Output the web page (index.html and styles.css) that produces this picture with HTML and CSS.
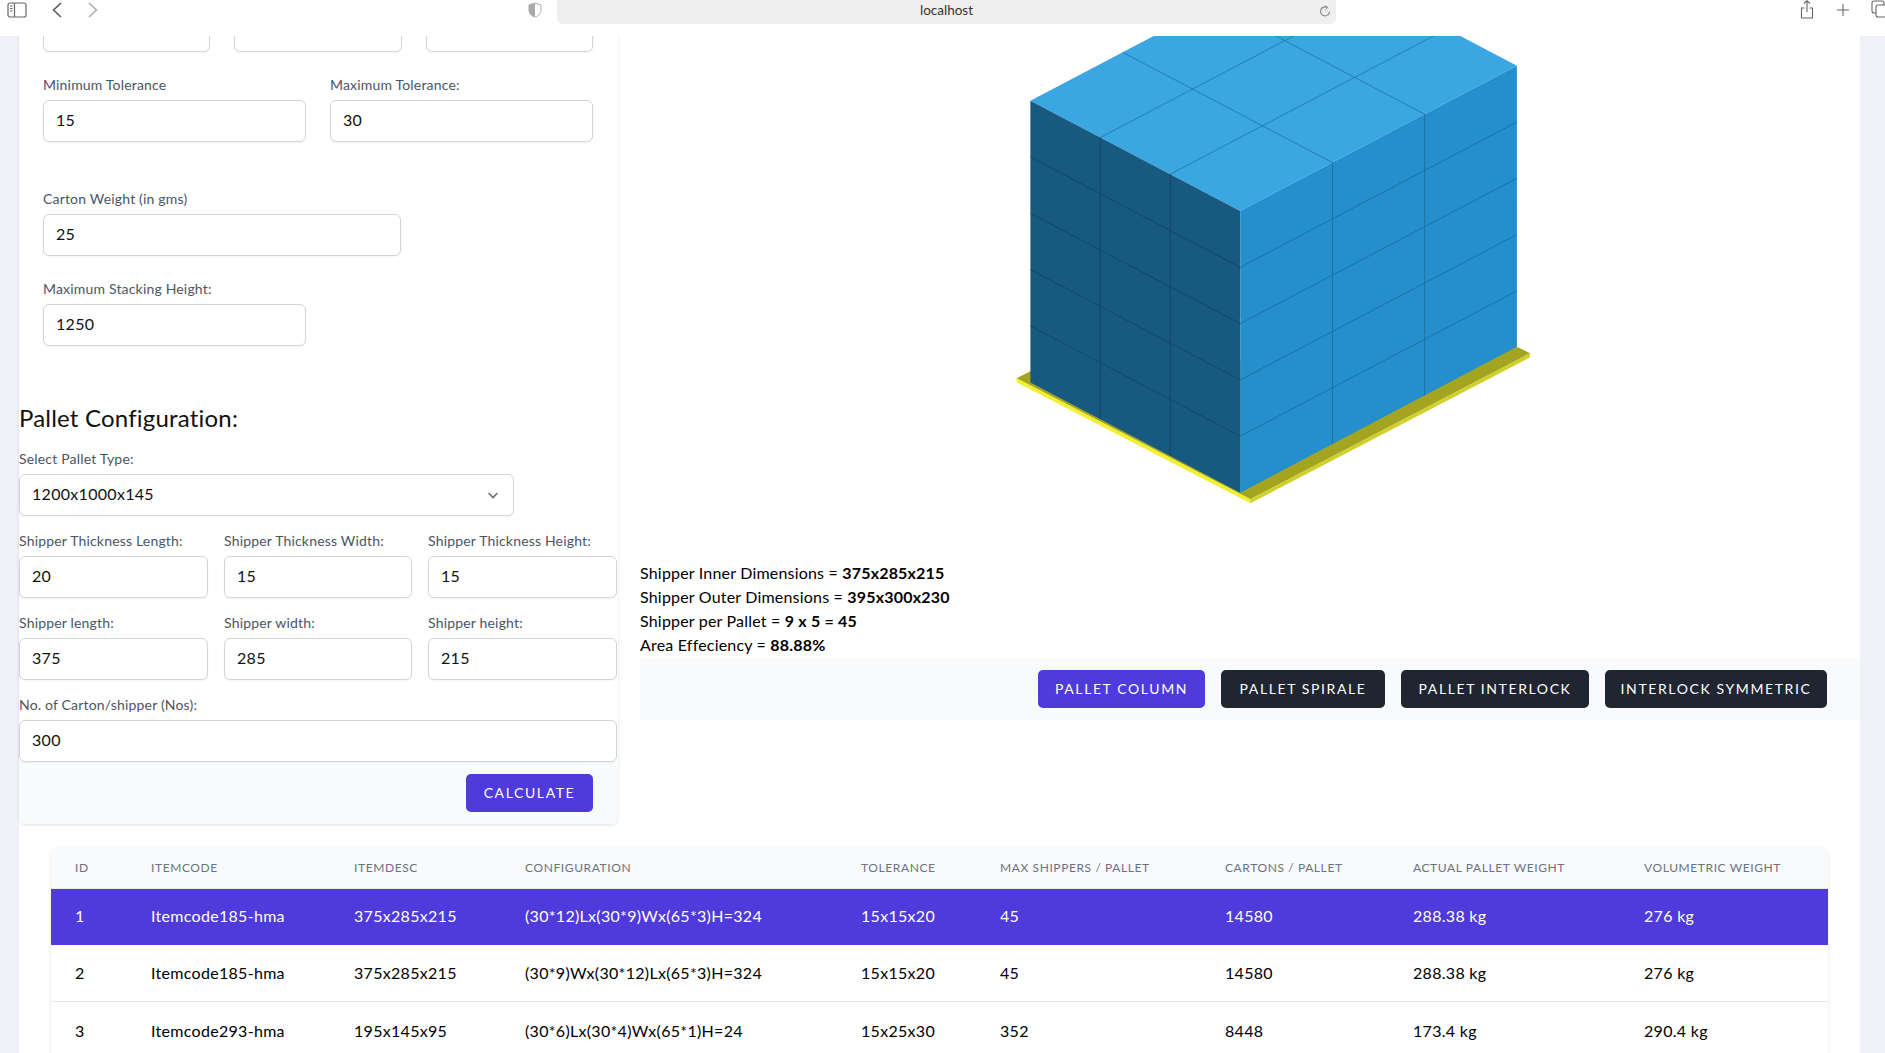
FILE: index.html
```html
<!DOCTYPE html>
<html lang="en">
<head>
  <meta charset="UTF-8">
  <title>localhost</title>
  <link rel="stylesheet" href="styles.css">
</head>
<body>

<header class="toolbar">
  <div class="toolbar-left">
    <svg class="tb-icon" width="20" height="16" viewBox="0 0 20 16"><rect x="1" y="1" width="18" height="14" rx="2" fill="none" stroke="#666" stroke-width="1.2"/><path d="M7.5 1v14" stroke="#666" stroke-width="1.2"/><path d="M3 4h2.5M3 6.5h2.5M3 9h2.5" stroke="#666"/></svg>
    <svg class="tb-back" width="10" height="16" viewBox="0 0 10 16"><path d="M9 1L1.500 8 9 15" fill="none" stroke="#555" stroke-width="1.500"/></svg>
    <svg class="tb-forward" width="10" height="16" viewBox="0 0 10 16"><path d="M1 1l7.500 7L1 15" fill="none" stroke="#aaa" stroke-width="1.500"/></svg>
  </div>
  <svg class="tb-shield" width="16" height="16" viewBox="0 0 16 16"><path d="M8 1l6 2v5c0 3.500-2.500 6-6 7-3.500-1-6-3.500-6-7V3z" fill="#fff" stroke="#aaa"/><path d="M8 1L2 3v5c0 3.500 2.500 6 6 7z" fill="#aaa"/></svg>
  <div class="urlbar">
    <span>localhost</span>
    <svg class="tb-reload" width="12" height="12" viewBox="0 0 12 12"><path d="M10.500 6.500a4.500 4.500 0 1 1-2.200-4" fill="none" stroke="#888" stroke-width="1.100"/><path d="M6.500 .5l2.200 2-2.200 2" fill="none" stroke="#888"/></svg>
  </div>
  <div class="toolbar-right">
    <svg width="14" height="19" viewBox="0 0 14 19"><path d="M4.500 8H1.500v10h11V8H9.500M7 12V1M4 3.500L7 .8l3 2.700" fill="none" stroke="#666" stroke-width="1.100"/></svg>
    <svg class="tb-plus" width="14" height="14" viewBox="0 0 14 14"><path d="M7 1v12M1 7h12" stroke="#666" stroke-width="1.100"/></svg>
    <svg class="tb-tabs" width="16" height="18" viewBox="0 0 16 18"><rect x="1" y="1" width="12" height="12" rx="2" fill="none" stroke="#666" stroke-width="1.100"/><rect x="5" y="5" width="12" height="12" rx="2" fill="#fff" stroke="#666" stroke-width="1.100"/></svg>
  </div>
</header>

<div class="viewport">
  <main class="page">
    <div class="columns">

      <section class="card">
        <div class="card-top">
          <div class="row three">
            <div class="field"><input class="input" value="30"></div>
            <div class="field"><input class="input" value="30"></div>
            <div class="field"><input class="input" value="65"></div>
          </div>
          <div class="row two">
            <div class="field"><label>Minimum Tolerance</label><input class="input" value="15"></div>
            <div class="field"><label>Maximum Tolerance:</label><input class="input" value="30"></div>
          </div>
          <div class="row carton">
            <div class="field"><label>Carton Weight (in gms)</label><input class="input" value="25"></div>
          </div>
          <div class="row two">
            <div class="field"><label>Maximum Stacking Height:</label><input class="input" value="1250"></div>
          </div>
        </div>

        <h2 class="section-title">Pallet Configuration:</h2>

        <div class="pallet-form">
          <div class="field select-field">
            <label>Select Pallet Type:</label>
            <div class="select">
              <span>1200x1000x145</span>
              <svg width="14" height="14" viewBox="0 0 14 14"><path d="M2.500 5l4.500 4.500L11.500 5" fill="none" stroke="#6b7280" stroke-width="1.700"/></svg>
            </div>
          </div>
          <div class="row pallet-three">
            <div class="field"><label>Shipper Thickness Length:</label><input class="input" value="20"></div>
            <div class="field"><label>Shipper Thickness Width:</label><input class="input" value="15"></div>
            <div class="field"><label>Shipper Thickness Height:</label><input class="input" value="15"></div>
          </div>
          <div class="row pallet-three">
            <div class="field"><label>Shipper length:</label><input class="input" value="375"></div>
            <div class="field"><label>Shipper width:</label><input class="input" value="285"></div>
            <div class="field"><label>Shipper height:</label><input class="input" value="215"></div>
          </div>
          <div class="field">
            <label>No. of Carton/shipper (Nos):</label>
            <input class="input" value="300">
          </div>
        </div>

        <div class="card-footer">
          <button class="btn btn-primary btn-calc">Calculate</button>
        </div>
      </section>

      <section class="result">
        <svg class="stack" width="1220" height="551" viewBox="640 10 1220 551">
          <!-- pallet -->
          <polygon points="1016.500,378.300 1030.400,371.300 1516.900,346.700 1530,353.300 1250.400,499.300" fill="#a3a521"/>
          <polygon points="1016.500,378.300 1250.400,499.300 1250.400,503.300 1016.500,382.300" fill="#f0f02e"/>
          <polygon points="1250.400,499.300 1530,353.300 1530,357.300 1250.400,503.300" fill="#cfd02a"/>
          <!-- faces -->
          <polygon points="1030.400,100.700 1240.200,211 1516.900,65.700 1307.100,-44.600" fill="#3aa7e3"/>
          <polygon points="1030.400,100.700 1240.200,211 1240.200,492.700 1030.400,382.400" fill="#18597f"/>
          <polygon points="1240.200,211 1516.900,65.700 1516.900,346.700 1240.200,492.700" fill="#258ecc"/>
          <!-- top grid -->
          <g stroke="#1d6d9c" stroke-width="0.700" fill="none">
            <path d="M1100.300,137.500 L1377,-7.800 M1170.300,174.200 L1447,28.900"/>
            <path d="M1332.400,162.600 L1122.600,52.300 M1424.600,114.200 L1214.800,3.900"/>
          </g>
          <!-- left face -->
          <g stroke="#11415f" stroke-width="0.800" fill="none">
            <path d="M1100.300,137.500 V419.100 M1170.300,174.200 V455.900"/>
            <path d="M1030.400,157 L1240.200,267.300 M1030.400,213.300 L1240.200,323.600 M1030.400,269.600 L1240.200,379.900 M1030.400,325.900 L1240.200,436.200"/>
          </g>
          <!-- right face -->
          <g stroke="#1a6a9b" stroke-width="0.800" fill="none">
            <path d="M1332.400,162.600 V444.200 M1424.600,114.200 V395.800"/>
            <path d="M1240.200,267.300 L1516.900,122 M1240.200,323.600 L1516.900,178.300 M1240.200,379.900 L1516.900,234.600 M1240.200,436.200 L1516.900,290.900"/>
          </g>
        </svg>

        <div class="summary">
          <p>Shipper Inner Dimensions = <b>375x285x215</b></p>
          <p>Shipper Outer Dimensions = <b>395x300x230</b></p>
          <p>Shipper per Pallet = <b>9 x 5 = 45</b></p>
          <p>Area Effeciency = <b>88.88%</b></p>
        </div>

        <div class="actions">
          <button class="btn btn-primary btn-column">Pallet Column</button>
          <button class="btn btn-dark btn-spirale">Pallet Spirale</button>
          <button class="btn btn-dark btn-interlock">Pallet Interlock</button>
          <button class="btn btn-dark btn-symmetric">Interlock Symmetric</button>
        </div>
      </section>
    </div>

    <div class="table-wrap">
      <table class="results">
        <thead>
          <tr>
            <th>ID</th><th>Itemcode</th><th>Itemdesc</th><th>Configuration</th><th>Tolerance</th>
            <th>Max Shippers / Pallet</th><th>Cartons / Pallet</th><th>Actual Pallet Weight</th><th>Volumetric Weight</th>
          </tr>
        </thead>
        <tbody>
          <tr class="selected">
            <td>1</td><td>Itemcode185-hma</td><td>375x285x215</td><td>(30*12)Lx(30*9)Wx(65*3)H=324</td><td>15x15x20</td>
            <td>45</td><td>14580</td><td>288.38 kg</td><td>276 kg</td>
          </tr>
          <tr>
            <td>2</td><td>Itemcode185-hma</td><td>375x285x215</td><td>(30*9)Wx(30*12)Lx(65*3)H=324</td><td>15x15x20</td>
            <td>45</td><td>14580</td><td>288.38 kg</td><td>276 kg</td>
          </tr>
          <tr class="last">
            <td>3</td><td>Itemcode293-hma</td><td>195x145x95</td><td>(30*6)Lx(30*4)Wx(65*1)H=24</td><td>15x25x30</td>
            <td>352</td><td>8448</td><td>173.4 kg</td><td>290.4 kg</td>
          </tr>
        </tbody>
      </table>
    </div>
  </main>
</div>

</body>
</html>
```

FILE: styles.css
```css
* {
  box-sizing: border-box;
}

html, body {
  margin: 0;
  height: 100%;
  overflow: hidden;
}

body {
  font-family: Lato, "Open Sans", sans-serif;
  background: #f0f1f6;
  color: #000;
}

/* browser toolbar */
.toolbar {
  height: 36px;
  background: #fff;
  display: flex;
  align-items: flex-start;
  position: relative;
  z-index: 2;
  overflow: hidden;
}

.toolbar > * {
  flex-shrink: 0;
}

.toolbar-left {
  width: 527px;
  display: flex;
  align-items: center;
  padding: 2px 0 0 7px;
}

.tb-back {
  margin-left: 25px;
}

.tb-forward {
  margin-left: 26px;
}

.tb-shield {
  margin-top: 2px;
}

.urlbar {
  width: 779px;
  height: 24px;
  margin-left: 14px;
  background: #efefef;
  border-radius: 0 0 6px 6px;
  display: flex;
  align-items: center;
  justify-content: center;
  position: relative;
  font-size: 13.500px;
  color: #333;
  padding-bottom: 5px;
}

.tb-reload {
  position: absolute;
  right: 5px;
  top: 5px;
}

.toolbar-right {
  display: flex;
  align-items: flex-start;
  padding-left: 464px;
}

.tb-plus {
  margin: 3px 0 0 22px;
}

.tb-tabs {
  margin-left: 21px;
}

/* page */
.viewport {
  height: 1017px;
  overflow: hidden;
}

.page {
  margin: -26px 25px 0 19px;
  background: #fff;
  height: 1100px;
}

.columns {
  display: grid;
  grid-template-columns: 599px 1fr;
  column-gap: 22px;
}

/* form card */
.card {
  background: #fff;
  border-radius: 0 0 6px 6px;
  box-shadow: 0 1px 3px rgba(0, 0, 0, .12);
}

.card-top {
  padding: 0 25px 0 24px;
}

.row {
  display: grid;
  column-gap: 24px;
  margin-bottom: 23px;
}

.row:last-child {
  margin-bottom: 0;
}

.row.three {
  grid-template-columns: repeat(3, 1fr);
}

.row.two {
  grid-template-columns: repeat(2, 1fr);
}

.row.carton {
  grid-template-columns: 358px;
  margin-top: 47px;
}

.field label {
  display: block;
  font-size: 14px;
  line-height: 20px;
  letter-spacing: .18px;
  color: #4b5563;
  margin-bottom: 5px;
}

.input,
.select {
  display: block;
  width: 100%;
  height: 42px;
  padding: 0 12px 3px;
  border: 1px solid #d1d5db;
  border-radius: 6px;
  box-shadow: 0 1px 2px rgba(0, 0, 0, .05);
  background: #fff;
  font-family: inherit;
  font-size: 16px;
  letter-spacing: .3px;
  color: #111;
}

.section-title {
  margin: 56px 0 15px;
  font-size: 24px;
  line-height: 32px;
  font-weight: 400;
  letter-spacing: .2px;
  color: #111;
}

.pallet-form {
  display: flex;
  flex-direction: column;
  gap: 15px;
  padding-right: 1px;
}

.pallet-form .row {
  margin: 0;
}

.row.pallet-three {
  grid-template-columns: 189px 188px 189px;
  column-gap: 16px;
}

.select-field {
  width: 495px;
}

.select {
  display: flex;
  align-items: center;
  justify-content: space-between;
  padding-right: 13px;
}

.select svg {
  margin-top: 3px;
}

.card-footer {
  background: #f9fafb;
  padding: 12px 25px 12px 0;
  display: flex;
  justify-content: flex-end;
  border-radius: 0 0 6px 6px;
}

.btn {
  height: 38px;
  padding: 0 0 2px;
  border: 0;
  border-radius: 5px;
  color: #fff;
  font-family: inherit;
  font-size: 14px;
  letter-spacing: 1.600px;
  text-transform: uppercase;
}

.btn-primary {
  background: #4f3adb;
}

.btn-dark {
  background: #1f2531;
}

.btn-calc { width: 127px; }
.btn-column { width: 167px; }
.btn-spirale { width: 164px; }
.btn-interlock { width: 188px; }
.btn-symmetric { width: 222px; }

/* result column */
.stack {
  display: block;
}

.summary {
  margin-bottom: 1px;
}

.summary p {
  margin: 0;
  font-size: 16px;
  line-height: 24px;
  letter-spacing: .19px;
}

.actions {
  background: #f9fafb;
  padding: 12px 33px 12px 0;
  display: flex;
  justify-content: flex-end;
  gap: 16px;
}

/* table */
.table-wrap {
  margin: 23px 32px 0;
}

.results {
  width: 1777px;
  table-layout: fixed;
  border-collapse: separate;
  border-spacing: 0;
  background: #fff;
  border-radius: 6px 6px 0 0;
  box-shadow: 0 1px 3px rgba(0, 0, 0, .12);
}

.results th {
  height: 42px;
  padding: 0 24px;
  background: #f9fafb;
  border-bottom: 1px solid #e5e7eb;
  font-size: 12px;
  font-weight: 400;
  letter-spacing: .6px;
  text-align: left;
  text-transform: uppercase;
  color: #6b7280;
}

.results th:first-child {
  border-top-left-radius: 6px;
}

.results th:last-child {
  border-top-right-radius: 6px;
}

.results td {
  height: 57px;
  padding: 0 24px 2px;
  border-bottom: 1px solid #e5e7eb;
  font-size: 16px;
  letter-spacing: .3px;
  white-space: nowrap;
}

.results th:nth-child(1) { width: 76px; }
.results th:nth-child(2) { width: 203px; }
.results th:nth-child(3) { width: 171px; }
.results th:nth-child(4) { width: 336px; }
.results th:nth-child(5) { width: 139px; }
.results th:nth-child(6) { width: 225px; }
.results th:nth-child(7) { width: 188px; }
.results th:nth-child(8) { width: 231px; }
.results th:nth-child(9) { width: 208px; }

.selected td {
  height: 56px;
  background: #4f3adb;
  color: #fff;
  border-bottom-color: #4f3adb;
}

.last td {
  padding-bottom: 0;
}
```
